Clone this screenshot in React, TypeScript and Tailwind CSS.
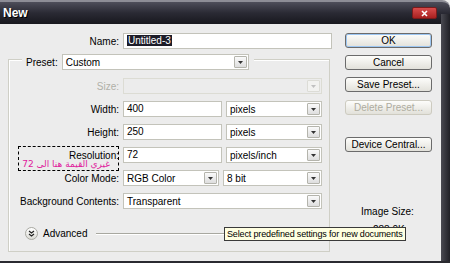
const box = 'h-[16px] border border-[#c3c3ba] bg-white pl-[3px] leading-[14px]';
const btn =
  'flex h-[15px] w-[87px] items-center justify-center rounded-[3px] border border-[#6b6b6b] bg-gradient-to-b from-[#fdfdfb] to-[#e2e1da] leading-none';

function Arrow({ disabled }: { disabled?: boolean }) {
  return (
    <span
      className={`flex h-[12px] w-[13px] shrink-0 items-center justify-center rounded-[1px] border ${
        disabled ? 'border-[#dcdcd6] bg-[#f2f2f0]' : 'border-[#b4b4ac] bg-gradient-to-b from-[#fafafa] to-[#dedede]'
      }`}
    >
      <svg width="5" height="3" viewBox="0 0 5 3">
        <path d="M0 0h5L2.5 3z" fill={disabled ? '#c0c0c0' : '#333'} />
      </svg>
    </span>
  );
}

function Select({ value, w, disabled }: { value?: string; w: string; disabled?: boolean }) {
  return (
    <div
      className={`flex h-[16px] ${w} items-center justify-between border pl-[3px] pr-[1px] ${
        disabled ? 'border-[#dcdcd4] bg-[#ececec]' : 'border-[#c3c3ba] bg-white'
      }`}
    >
      <span>{value}</span>
      <Arrow disabled={disabled} />
    </div>
  );
}

function Row({ name, children, className = '' }: { name: string; children: React.ReactNode; className?: string }) {
  return (
    <div className={`flex items-center ${className}`}>
      <span className="w-[115px] shrink-0 pr-[4px] text-right">{name}</span>
      <div className="flex gap-[4px]">{children}</div>
    </div>
  );
}

export default function App() {
  return (
    <div className="relative h-[263px] w-[450px] overflow-hidden bg-[#ececec] font-['Liberation_Sans',Arial,sans-serif] text-[10px] text-black">
      {/* title bar */}
      <div className="flex h-[24px] items-center justify-between rounded-tr-[8px] border-t-[2px] border-[#8d8d96] bg-gradient-to-b from-[#4e4e5a] via-[#2a2a34] to-[#18181e] pl-[3px] pr-[13px]">
        <span className="text-[12px] font-bold text-white [text-shadow:1px_1px_0_#000]">New</span>
        <span className="flex h-[12px] w-[25px] items-center justify-center rounded-[2px] border border-[#7a1b1b] bg-gradient-to-b from-[#d84b4b] to-[#a82020]">
          <svg width="7" height="7" viewBox="0 0 7 7">
            <path d="M1 1l5 5M6 1L1 6" stroke="#fff" strokeWidth="1.6" />
          </svg>
        </span>
      </div>

      <div className="flex h-[239px]">
        {/* left part */}
        <div className="w-[335px] pt-[9px]">
          <div className="flex items-center">
            <span className="w-[123px] shrink-0 pr-[4px] text-right">Name:</span>
            <div className={`${box} w-[209px]`}>
              <span className="bg-[#1d1d28] px-[1px] text-white">Untitled-3</span>
            </div>
          </div>

          <div className="relative ml-[8px] mt-[10px] h-[193px] w-[322px] border border-[#cfcfc6] shadow-[inset_1px_1px_0_#fff]">
            <div className="-mt-[6px] ml-[13px] flex items-center">
              <span className="bg-[#ececec] pl-[4px] pr-[4px]">Preset:</span>
              <div className="flex bg-[#ececec] pr-[5px]">
                <Select value="Custom" w="w-[187px]" />
              </div>
            </div>

            <div className="-ml-[1px] mt-[8px] flex flex-col gap-[7px]">
              <Row name="Size:" className="text-[#b0b0a8]">
                <Select w="w-[199px]" disabled />
              </Row>
              <Row name="Width:">
                <div className={`${box} w-[99px]`}>400</div>
                <Select value="pixels" w="w-[96px]" />
              </Row>
              <Row name="Height:">
                <div className={`${box} w-[99px]`}>250</div>
                <Select value="pixels" w="w-[96px]" />
              </Row>
              <Row name="Resolution:">
                <div className={`${box} w-[99px]`}>72</div>
                <Select value="pixels/inch" w="w-[96px]" />
              </Row>
              <Row name="Color Mode:">
                <Select value="RGB Color" w="w-[96px]" />
                <Select value="8 bit" w="w-[99px]" />
              </Row>
              <Row name="Background Contents:">
                <Select value="Transparent" w="w-[199px]" />
              </Row>
            </div>

            <div className="ml-[16px] mt-[17px] flex items-center gap-[5px]">
              <span className="flex h-[13px] w-[13px] items-center justify-center rounded-full border border-[#a9a9a2] bg-gradient-to-b from-[#ffffff] to-[#dcdcd6]">
                <svg width="7" height="7" viewBox="0 0 7 7">
                  <path d="M1 1l2.5 2L6 1M1 4l2.5 2L6 4" fill="none" stroke="#222" strokeWidth="1.2" />
                </svg>
              </span>
              <span>Advanced</span>
              <span className="ml-[4px] mr-[8px] h-[2px] flex-1 border-t border-b border-t-[#a8a8a0] border-b-white" />
            </div>
          </div>

          {/* annotation */}
          <div className="absolute left-[18px] top-[146px] h-[25px] w-[101px] border border-dashed border-black">
            <div
              dir="rtl"
              className="absolute bottom-[1px] right-[8px] whitespace-nowrap font-['DejaVu_Sans',sans-serif] text-[9px] leading-none text-[#e0209c]"
            >
              غيري القيمة هنا الى 72
            </div>
          </div>
        </div>

        {/* buttons */}
        <div className="flex w-[106px] flex-col pl-[10px] pt-[9px]">
          <div className={`${btn} shadow-[inset_0_0_0_1px_#9cc6f2]`}>OK</div>
          <div className={`${btn} mt-[7px]`}>Cancel</div>
          <div className={`${btn} mt-[7px]`}>Save Preset...</div>
          <div className={`${btn} mt-[8px] border-[#cdcbc0] text-[#aeac9f]`}>Delete Preset...</div>
          <div className={`${btn} mt-[22px]`}>Device Central...</div>
          <div className="ml-[16px] mt-[52px]">Image Size:</div>
          <div className="ml-[28px] mt-[3px]">288.0K</div>
        </div>
      </div>

      {/* window frame */}
      <div className="absolute right-0 top-[14px] h-[249px] w-[9px] bg-gradient-to-r from-[#4a4a52] to-[#202026]" />
      <div className="absolute bottom-0 left-0 h-[2px] w-[450px] bg-[#2a2a30]" />

      {/* tooltip */}
      <div className="absolute left-[224px] top-[227px] flex h-[14px] items-center border border-[#3a3a3a] bg-[#ffffe1] px-[2px] text-[9px] leading-none tracking-[-0.15px]">
        Select predefined settings for new documents
      </div>
    </div>
  );
}
